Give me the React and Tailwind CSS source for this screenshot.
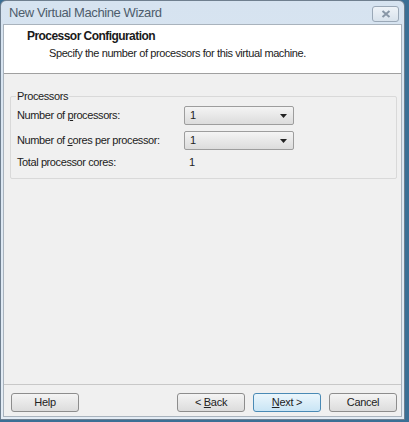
import React from "react";

const font = { fontFamily: '"Liberation Sans", Arial, sans-serif' };

function Combo({ value }) {
  return (
    <div className="flex h-[19px] w-[110px] items-center justify-between rounded-[2px] border border-[#9d9d9d] bg-gradient-to-b from-[#f4f4f4] to-[#dcdcdc] pl-[5px] pr-[6px] text-[11px] text-[#222]">
      <span>{value}</span>
      <svg width="7" height="4" viewBox="0 0 7 4"><path d="M0 0h7L3.5 4z" fill="#222" /></svg>
    </div>
  );
}

function Btn({ children, primary }) {
  return (
    <div
      className={`flex h-[19px] w-[68px] items-center justify-center rounded-[3px] border text-[11px] tracking-[-0.3px] text-[#222] ${
        primary
          ? "border-[#4a8ab5] bg-gradient-to-b from-[#ebf6fc] to-[#c9e5f5]"
          : "border-[#8d8d8d] bg-gradient-to-b from-[#f4f4f4] to-[#dcdcdc]"
      }`}
    >
      <span>{children}</span>
    </div>
  );
}

export default function App() {
  return (
    <div className="relative h-[422px] w-[409px] overflow-hidden bg-[#3a6f95]" style={font}>
      <div className="flex h-[420px] w-[405px] flex-col rounded-t-[6px] border border-[#6f7f8f] bg-gradient-to-b from-[#d6e3f0] to-[#e3ecf5] px-[2px] pb-[2px]">
        {/* title bar */}
        <div className="flex h-[23px] shrink-0 items-center justify-between pl-[6px] pr-[3px]">
          <span className="text-[13px] tracking-[-0.4px] text-[#4e5d6c]">New Virtual Machine Wizard</span>
          <div className="mt-[2px] flex h-[16px] w-[27px] items-center justify-center rounded-[3px] border border-[#9aa8b7] bg-gradient-to-b from-[#eef3f8] to-[#d8e2ec]">
            <svg width="10" height="8" viewBox="0 0 10 8">
              <path d="M1.5 1l7 6M8.5 1l-7 6" stroke="#8896a6" strokeWidth="2" fill="none" />
            </svg>
          </div>
        </div>
        {/* client */}
        <div className="flex flex-1 flex-col border border-[#a9b3bd] bg-[#f0f0f0]">
          <div className="h-[49px] shrink-0 border-b border-[#a0a0a0] bg-white pl-[23px] pt-[3px]">
            <div className="text-[12px] font-bold leading-[16px] tracking-[-0.55px] text-[#1a1a1a]">Processor Configuration</div>
            <div className="pl-[22px] pt-[2px] text-[11px] leading-[14px] tracking-[-0.4px] text-[#222]">
              Specify the number of processors for this virtual machine.
            </div>
          </div>
          <div className="flex-1 pl-[6px] pr-[4px] pt-[22px]">
            <div className="relative h-[83px] rounded-[2px] border border-[#d9d9d9] px-[6px] pt-[9px] text-[11px] tracking-[-0.4px] text-[#222]">
              <span className="absolute left-[5px] top-[-8px] bg-[#f0f0f0] px-[1px] leading-[14px]">Processors</span>
              <div className="flex flex-col">
                <div className="flex h-[19px] items-center">
                  <span className="w-[167px]">
                    Number of <u>p</u>rocessors:
                  </span>
                  <Combo value="1" />
                </div>
                <div className="mt-[6px] flex h-[19px] items-center">
                  <span className="w-[167px]">
                    Number of <u>c</u>ores per processor:
                  </span>
                  <Combo value="1" />
                </div>
                <div className="mt-[3px] flex h-[19px] items-center">
                  <span className="w-[172px]">Total processor cores:</span>
                  <span>1</span>
                </div>
              </div>
            </div>
          </div>
          <div className="flex h-[32px] shrink-0 items-start gap-[8px] border-t border-[#c8c8c8] pl-[7px] pr-[4px] pt-[8px]">
            <Btn>Help</Btn>
            <div className="flex-1" />
            <Btn>
              {"< "}
              <u>B</u>ack
            </Btn>
            <Btn primary>
              <u>N</u>ext{" >"}
            </Btn>
            <Btn>Cancel</Btn>
          </div>
        </div>
      </div>
    </div>
  );
}
